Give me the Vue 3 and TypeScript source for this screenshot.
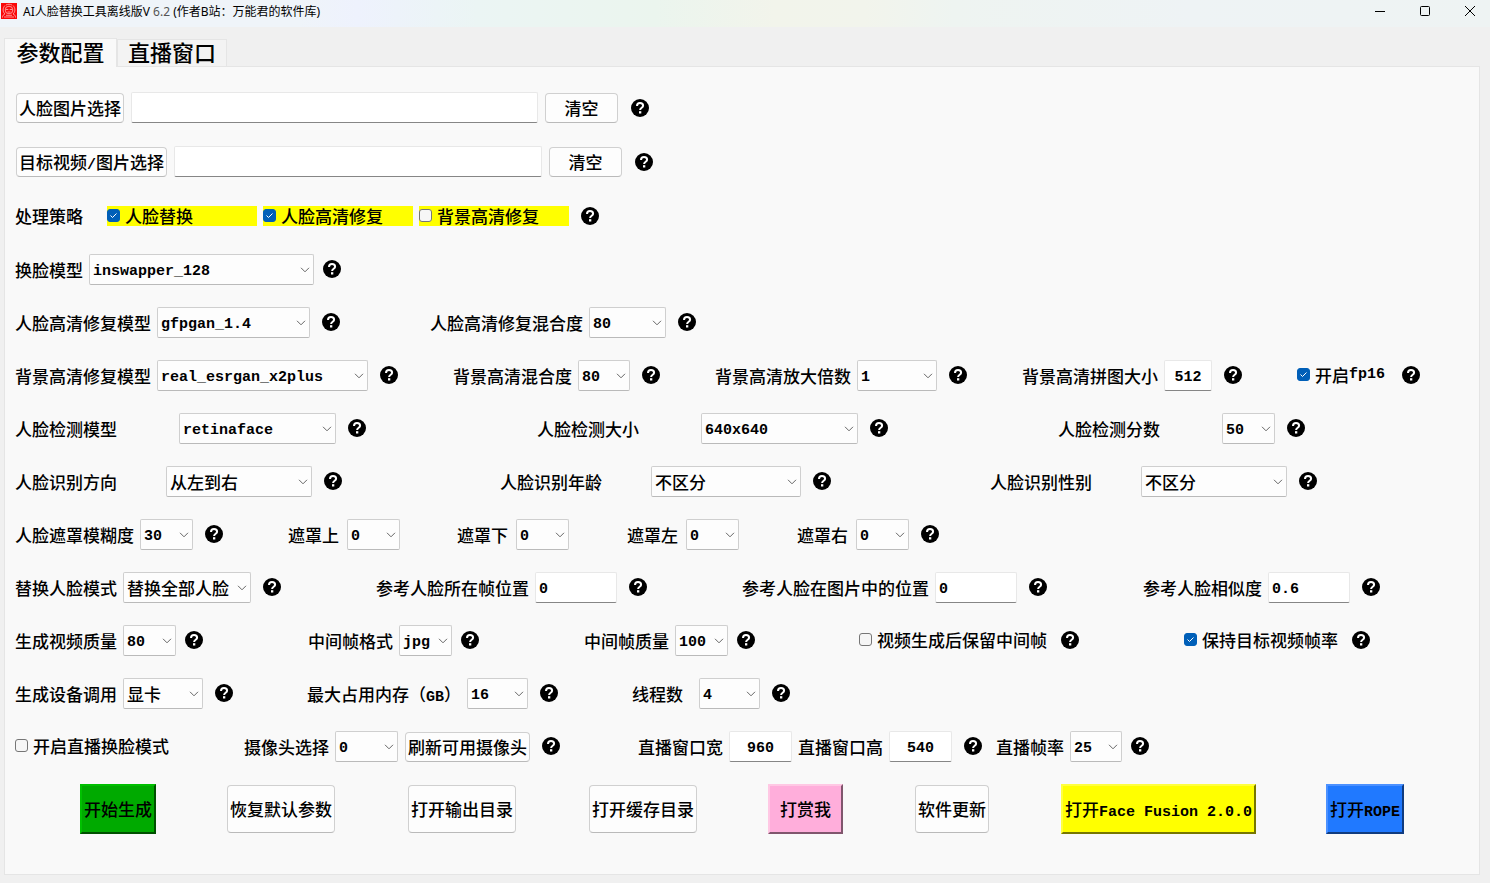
<script setup lang="ts">
import { reactive } from 'vue'

interface Part {
  kind: 'label' | 'select' | 'input' | 'check' | 'button' | 'help'
  id?: string
  text?: string
  latin?: string
  tail?: string
  size?: string
  options?: string[]
}
interface Row {
  name: string
  groups: Part[][]
}

const values = reactive<Record<string, string>>({
  face: '', target: '', swapper: 'inswapper_128', enhancer: 'gfpgan_1.4', faceBlend: '80',
  bgModel: 'real_esrgan_x2plus', bgBlend: '80', bgScale: '1', tile: '512',
  detector: 'retinaface', detSize: '640x640', detScore: '50',
  order: '从左到右', age: '不区分', gender: '不区分',
  blur: '30', top: '0', bottom: '0', left: '0', right: '0',
  mode: '替换全部人脸', refFrame: '0', refPos: '0', similarity: '0.6',
  quality: '80', frameFormat: 'jpg', frameQuality: '100',
  device: '显卡', memory: '16', threads: '4',
  camera: '0', liveW: '960', liveH: '540', liveFps: '25',
})
const checks = reactive<Record<string, boolean>>({
  swap: true, faceHd: true, bgHd: false, fp16: true, keepFrames: false, keepFps: true, live: false,
})

const label = (id: string, text: string, size = '', latin = '', tail = ''): Part => ({ kind: 'label', id, text, size, latin, tail })
const select = (id: string, size: string): Part => ({ kind: 'select', id, size, options: [values[id]] })
const input = (id: string, size: string): Part => ({ kind: 'input', id, size })
const check = (id: string, text: string, latin = ''): Part => ({ kind: 'check', id, text, latin })
const help = (size = ''): Part => ({ kind: 'help', size })

const rows: Row[] = [
  { name: 'swapper', groups: [[label('swapper', '换脸模型'), select('swapper', 'w225'), help('near')]] },
  { name: 'enhance', groups: [
    [label('enhancer', '人脸高清修复模型'), select('enhancer', 'w153'), help()],
    [label('faceBlend', '人脸高清修复混合度'), select('faceBlend', 'w77'), help()],
  ] },
  { name: 'background', groups: [
    [label('bgModel', '背景高清修复模型'), select('bgModel', 'w211'), help()],
    [label('bgBlend', '背景高清混合度'), select('bgBlend', 'w52'), help()],
    [label('bgScale', '背景高清放大倍数'), select('bgScale', 'w80'), help()],
    [label('tile', '背景高清拼图大小'), input('tile', 'w48 center'), help()],
    [check('fp16', '开启', 'fp16'), help('far')],
  ] },
  { name: 'detect', groups: [
    [label('detector', '人脸检测模型', 'gap62'), select('detector', 'w157'), help()],
    [label('detSize', '人脸检测大小', 'gap62'), select('detSize', 'w157'), help()],
    [label('detScore', '人脸检测分数', 'gap62'), select('detScore', 'w53'), help()],
  ] },
  { name: 'recognise', groups: [
    [label('order', '人脸识别方向', 'gap49'), select('order', 'w146'), help()],
    [label('age', '人脸识别年龄', 'gap49'), select('age', 'w150'), help()],
    [label('gender', '人脸识别性别', 'gap49'), select('gender', 'w146'), help()],
  ] },
  { name: 'mask', groups: [
    [label('blur', '人脸遮罩模糊度'), select('blur', 'w53'), help()],
    [label('top', '遮罩上', 'gap8'), select('top', 'w53')],
    [label('bottom', '遮罩下', 'gap8'), select('bottom', 'w53')],
    [label('left', '遮罩左', 'gap8'), select('left', 'w53')],
    [label('right', '遮罩右', 'gap8'), select('right', 'w53'), help()],
  ] },
  { name: 'mode', groups: [
    [label('mode', '替换人脸模式'), select('mode', 'w128'), help()],
    [label('refFrame', '参考人脸所在帧位置'), input('refFrame', 'w82'), help()],
    [label('refPos', '参考人脸在图片中的位置'), input('refPos', 'w82'), help()],
    [label('similarity', '参考人脸相似度'), input('similarity', 'w82'), help()],
  ] },
  { name: 'quality', groups: [
    [label('quality', '生成视频质量'), select('quality', 'w53'), help('near')],
    [label('frameFormat', '中间帧格式'), select('frameFormat', 'w53'), help('near')],
    [label('frameQuality', '中间帧质量'), select('frameQuality', 'w53'), help('near')],
    [check('keepFrames', '视频生成后保留中间帧'), help('mid')],
    [check('keepFps', '保持目标视频帧率'), help('mid')],
  ] },
  { name: 'device', groups: [
    [label('device', '生成设备调用'), select('device', 'w80'), help()],
    [label('memory', '最大占用内存（', '', 'GB', '）'), select('memory', 'w61'), help()],
    [label('threads', '线程数', 'gap16'), select('threads', 'w61'), help()],
  ] },
  { name: 'live', groups: [
    [check('live', '开启直播换脸模式')],
    [label('camera', '摄像头选择'), select('camera', 'w63'), { kind: 'button', text: '刷新可用摄像头' }, help()],
    [label('liveW', '直播窗口宽'), input('liveW', 'w63 center')],
    [label('liveH', '直播窗口高'), input('liveH', 'w63 center'), help()],
    [label('liveFps', '直播帧率'), select('liveFps', 'w52'), help('near')],
  ] },
]

const files = [
  { id: 'face', text: '人脸图片', rest: '选择', slash: '' },
  { id: 'target', text: '目标视频', rest: '图片选择', slash: '/' },
]
const strategies = [
  { id: 'swap', text: '人脸替换' },
  { id: 'faceHd', text: '人脸高清修复' },
  { id: 'bgHd', text: '背景高清修复' },
]
const actions = [
  { text: '开始生成', latin: '', tone: 'green' },
  { text: '恢复默认参数', latin: '', tone: 'plain' },
  { text: '打开输出目录', latin: '', tone: 'plain' },
  { text: '打开缓存目录', latin: '', tone: 'plain' },
  { text: '打赏我', latin: '', tone: 'pink' },
  { text: '软件更新', latin: '', tone: 'plain' },
  { text: '打开', latin: 'Face Fusion 2.0.0', tone: 'yellow' },
  { text: '打开', latin: 'ROPE', tone: 'blue' },
]
const isLatin = (s: string) => /^[\x00-\x7f]*$/.test(s)
</script>

<template>
  <div class="window">
    <svg class="defs" width="0" height="0" aria-hidden="true">
      <symbol id="help-mark" viewBox="0 0 18 18">
        <circle cx="9" cy="9" r="9" fill="#000" />
        <path d="M6 7C6 4.900 7.200 4 9 4s3.100 1 3.100 2.700c0 2.100-3 2-3 4.300" fill="none" stroke="#fff" stroke-width="2" />
        <rect x="8" y="12.200" width="2.300" height="2.300" fill="#fff" />
      </symbol>
      <symbol id="chevron" viewBox="0 0 10 6">
        <path d="M1 .8l4 4 4-4" fill="none" stroke="#666" stroke-width="1" />
      </symbol>
    </svg>

    <header class="titlebar">
      <svg class="logo" viewBox="0 0 16 16" aria-hidden="true">
        <rect width="16" height="16" fill="#fa0808" />
        <g fill="none" stroke="#ffb4b4" stroke-width=".8">
          <path d="M4 2.500C1.500 5 1.500 9 4 11M12 2.500c2.500 2.500 2.500 6.500 0 8.500M5 2c2-1 4-1 6 0" />
          <circle cx="8" cy="7" r="3.800" />
          <path d="M5 6.500h2.300M8.700 6.500H11M6.500 9h3M1.500 14.500c0-2 1-3 2.500-3.500M14.500 14.500c0-2-1-3-2.500-3.500M3 14h10M5 12.300h6" />
        </g>
      </svg>
      <h1>AI人脸替换工具离线版V <span class="version">6.2</span> (作者B站：万能君的软件库)</h1>
      <div class="caption-buttons">
        <button type="button" aria-label="最小化"><svg viewBox="0 0 12 12"><path d="M1 6.500h10" /></svg></button>
        <button type="button" aria-label="最大化"><svg viewBox="0 0 12 12"><rect x="1.500" y="1.500" width="9" height="9" rx="1" /></svg></button>
        <button type="button" aria-label="关闭"><svg viewBox="0 0 12 12"><path d="M1 1l10 10M11 1L1 11" /></svg></button>
      </div>
    </header>

    <nav class="tabs">
      <button type="button" class="tab active">参数配置</button>
      <button type="button" class="tab">直播窗口</button>
    </nav>

    <main class="panel">
      <div v-for="f in files" :key="f.id" class="row file" :class="f.id">
        <button type="button" class="btn pick">{{ f.text }}<span v-if="f.slash" class="latin">{{ f.slash }}</span>{{ f.rest }}</button>
        <input v-model="values[f.id]" type="text" class="field path" :aria-label="f.text" />
        <button type="button" class="btn clear">清空</button>
        <button type="button" class="help" aria-label="帮助"><svg><use href="#help-mark" /></svg></button>
      </div>

      <div class="row strategy">
        <span class="caption">处理策略</span>
        <label v-for="s in strategies" :key="s.id" class="check marked">
          <input v-model="checks[s.id]" type="checkbox" />{{ s.text }}
        </label>
        <button type="button" class="help" aria-label="帮助"><svg><use href="#help-mark" /></svg></button>
      </div>

      <div v-for="row in rows" :key="row.name" class="row grid" :class="row.name">
        <div v-for="(group, g) in row.groups" :key="g" class="group">
          <template v-for="(p, i) in group" :key="i">
            <label v-if="p.kind === 'label'" :for="p.id" class="caption" :class="p.size">{{ p.text }}<span v-if="p.latin" class="latin">{{ p.latin }}</span>{{ p.tail }}</label>
            <span v-else-if="p.kind === 'select'" class="combo" :class="p.size">
              <select :id="p.id" v-model="values[p.id!]" :class="{ latin: isLatin(values[p.id!]) }">
                <option v-for="o in p.options" :key="o">{{ o }}</option>
              </select>
              <svg><use href="#chevron" /></svg>
            </span>
            <input v-else-if="p.kind === 'input'" :id="p.id" v-model="values[p.id!]" type="text" class="field latin" :class="p.size" />
            <label v-else-if="p.kind === 'check'" class="check">
              <input v-model="checks[p.id!]" type="checkbox" />{{ p.text }}<span v-if="p.latin" class="latin">{{ p.latin }}</span>
            </label>
            <button v-else-if="p.kind === 'button'" type="button" class="btn refresh">{{ p.text }}</button>
            <button v-else type="button" class="help" :class="p.size" aria-label="帮助"><svg><use href="#help-mark" /></svg></button>
          </template>
        </div>
      </div>

      <div class="actions">
        <div v-for="a in actions" :key="a.text + a.latin">
          <button type="button" class="action" :class="a.tone">{{ a.text }}<span v-if="a.latin" class="latin">{{ a.latin }}</span></button>
        </div>
      </div>
    </main>
  </div>
</template>

<style>
body { margin: 0; background: #f0f0f0; }
</style>

<style scoped>
* { box-sizing: border-box; }
.window {
  display: flex;
  flex-direction: column;
  min-height: 100vh;
  padding-bottom: 8px;
  background: #f0f0f0;
  color: #000;
  font: 500 17px/20px "Noto Sans CJK SC", sans-serif;
  white-space: nowrap;
}
.defs { position: absolute; }
button, input, select { margin: 0; font: inherit; color: inherit; }
.latin { font-family: "Liberation Mono", monospace; font-size: 15px; font-weight: 700; }
span.latin { line-height: 0; }

.titlebar {
  display: flex;
  align-items: center;
  height: 27px;
  padding-left: 1px;
  background: linear-gradient(90deg, #eff4f9 20%, #eef2fd 24%, #ebf5f4 32%, #ebf5ee 44%, #f2f4eb 52%, #f2f4ec 58%, #eef4f1 64%, #eef3f5 80%, #eef3f3);
}
.logo { width: 16px; height: 16px; margin: 0 6px 5px 0; }
h1 { margin: 0 0 4px; font: 400 12px/18px "Noto Sans", "Noto Sans CJK SC", sans-serif; }
.version { color: #555; }
.caption-buttons { display: flex; margin: 0 -2px 5px auto; }
.caption-buttons button { display: flex; justify-content: center; width: 45px; padding: 0; border: 0; background: none; }
.caption-buttons svg { width: 12px; height: 12px; fill: none; stroke: #000; stroke-width: 1; }

.tabs { display: flex; align-items: flex-end; height: 39px; padding: 0 4px; }
.tab {
  height: 27px;
  padding: 0 10px 4px;
  border: 1px solid #e5e5e5;
  border-bottom: 0;
  background: #f3f3f3;
  font-size: 22px;
  line-height: 22px;
}
.tab.active {
  z-index: 1;
  width: 113px;
  height: 29px;
  margin-bottom: -1px;
  background: #f9f9f9;
}

.panel {
  flex: 1;
  margin: 0 10px 0 4px;
  padding: 25px 9px 20px 10px;
  border: 1px solid #e5e5e5;
  background: #f9f9f9;
}
.row { display: flex; align-items: center; height: 31px; margin-bottom: 22px; }
.row.file, .row.strategy { margin-bottom: 23px; }
.grid { display: grid; }
.group { display: flex; align-items: center; min-width: 0; }
.enhance { grid-template-columns: minmax(0, 415fr) minmax(0, 1040fr); }
.background { grid-template-columns: minmax(0, 438fr) minmax(0, 262fr) minmax(0, 307fr) minmax(0, 275fr) minmax(0, 173fr); }
.detect { grid-template-columns: minmax(0, 522fr) minmax(0, 521fr) minmax(0, 412fr); }
.recognise { grid-template-columns: minmax(0, 485fr) minmax(0, 490fr) minmax(0, 480fr); }
.mask { grid-template-columns: minmax(0, 273fr) minmax(0, 169fr) minmax(0, 170fr) minmax(0, 170fr) minmax(0, 673fr); }
.mode { grid-template-columns: minmax(0, 361fr) minmax(0, 366fr) minmax(0, 401fr) minmax(0, 327fr); }
.quality { grid-template-columns: minmax(0, 293fr) minmax(0, 276fr) minmax(0, 275fr) minmax(0, 325fr) minmax(0, 286fr); }
.device { grid-template-columns: minmax(0, 292fr) minmax(0, 325fr) minmax(0, 838fr); }
.live { grid-template-columns: minmax(0, 229fr) minmax(0, 394fr) minmax(0, 160fr) minmax(0, 198fr) minmax(0, 474fr); }

.caption { margin-right: 6px; }
.gap8 { margin-right: 8px; }
.gap16 { margin-right: 16px; }
.gap49 { margin-right: 49px; }
.gap62 { margin-right: 62px; }
.w48 { width: 48px; }
.w52 { width: 52px; }
.w53 { width: 53px; }
.w61 { width: 61px; }
.w63 { width: 63px; }
.w77 { width: 77px; }
.w80 { width: 80px; }
.w82 { width: 82px; }
.w128 { width: 128px; }
.w146 { width: 146px; }
.w150 { width: 150px; }
.w153 { width: 153px; }
.w157 { width: 157px; }
.w211 { width: 211px; }
.w225 { width: 225px; }

.combo { position: relative; flex: none; height: 31px; }
.combo select {
  appearance: none;
  width: 100%;
  height: 100%;
  padding: 0 0 0 3px;
  border: 1px solid #cfcfcf;
  border-bottom-color: #bababa;
  border-radius: 2px;
  background: #fdfdfd;
}
.combo svg { position: absolute; right: 4px; top: 13px; width: 10px; height: 6px; pointer-events: none; }
.field {
  flex: none;
  height: 31px;
  padding: 0 3px;
  border: 1px solid #e8e8e8;
  border-bottom-color: #868686;
  border-radius: 2px;
  background: #fff;
}
.field.center { padding: 0; text-align: center; }
.combo select.latin, .field.latin { padding-top: 4px; }

.help { flex: none; width: 18px; height: 18px; margin-left: 12px; padding: 0; border: 0; background: none; }
.help.near { margin-left: 9px; }
.help.mid { margin-left: 14px; }
.help.far { margin-left: 17px; }
.help svg { display: block; width: 18px; height: 18px; }
.grid .help, .grid .check { margin-bottom: 2px; }

.btn {
  flex: none;
  height: 30px;
  padding: 0 2px;
  border: 1px solid #d0d0d0;
  border-bottom-color: #bababa;
  border-radius: 4px;
  background: #fdfdfd;
}
.pick { margin-left: 1px; }
.path { flex: 0 1 407px; margin: 0 7px; }
.target .path { flex-basis: 368px; }
.clear { width: 73px; }
.refresh { width: 125px; margin-left: 7px; }
.file .help { margin-left: 13px; }

.check { display: flex; align-items: center; }
.check input {
  appearance: none;
  flex: none;
  width: 13px;
  height: 13px;
  margin-right: 5px;
  border: 1px solid #767676;
  border-radius: 3px;
  background: #f6f6f6;
}
.check input:checked {
  border-color: #005fb8;
  background: #005fb8 url("data:image/svg+xml,%3Csvg xmlns='http://www.w3.org/2000/svg' viewBox='0 0 11 11'%3E%3Cpath d='M2.500 5.500l2 2 4-4' fill='none' stroke='%23fff'/%3E%3C/svg%3E") center / 11px 11px no-repeat;
}
.strategy .caption { margin-right: 24px; }
.marked { width: 150px; height: 20px; margin-right: 6px; background: #ff0; }
.strategy .help { margin-left: 6px; }

.actions {
  display: grid;
  grid-template-columns: minmax(0, 147fr) minmax(0, 181fr) minmax(0, 181fr) minmax(0, 179fr) minmax(0, 147fr) minmax(0, 146fr) minmax(0, 265fr) minmax(0, 144fr);
  padding-left: 65px;
}
.action { height: 50px; padding: 0 2px; border: 2px solid; }
.plain {
  height: 48px;
  margin-top: 1px;
  border: 1px solid #d0d0d0;
  border-bottom-color: #bababa;
  border-radius: 4px;
  background: #fdfdfd;
}
.green { border-color: #00c000 #005000 #005000 #00c000; background: #00aa00; }
.pink { width: 75px; border-color: #ffc8e4 #80566d #80566d #ffc8e4; background: #ffaedb; }
.yellow { width: 195px; border-color: #ffff40 #777700 #777700 #ffff40; background: #ff0; }
.blue { width: 78px; border-color: #4c91ff #103c80 #103c80 #4c91ff; background: #2079ff; }
</style>
